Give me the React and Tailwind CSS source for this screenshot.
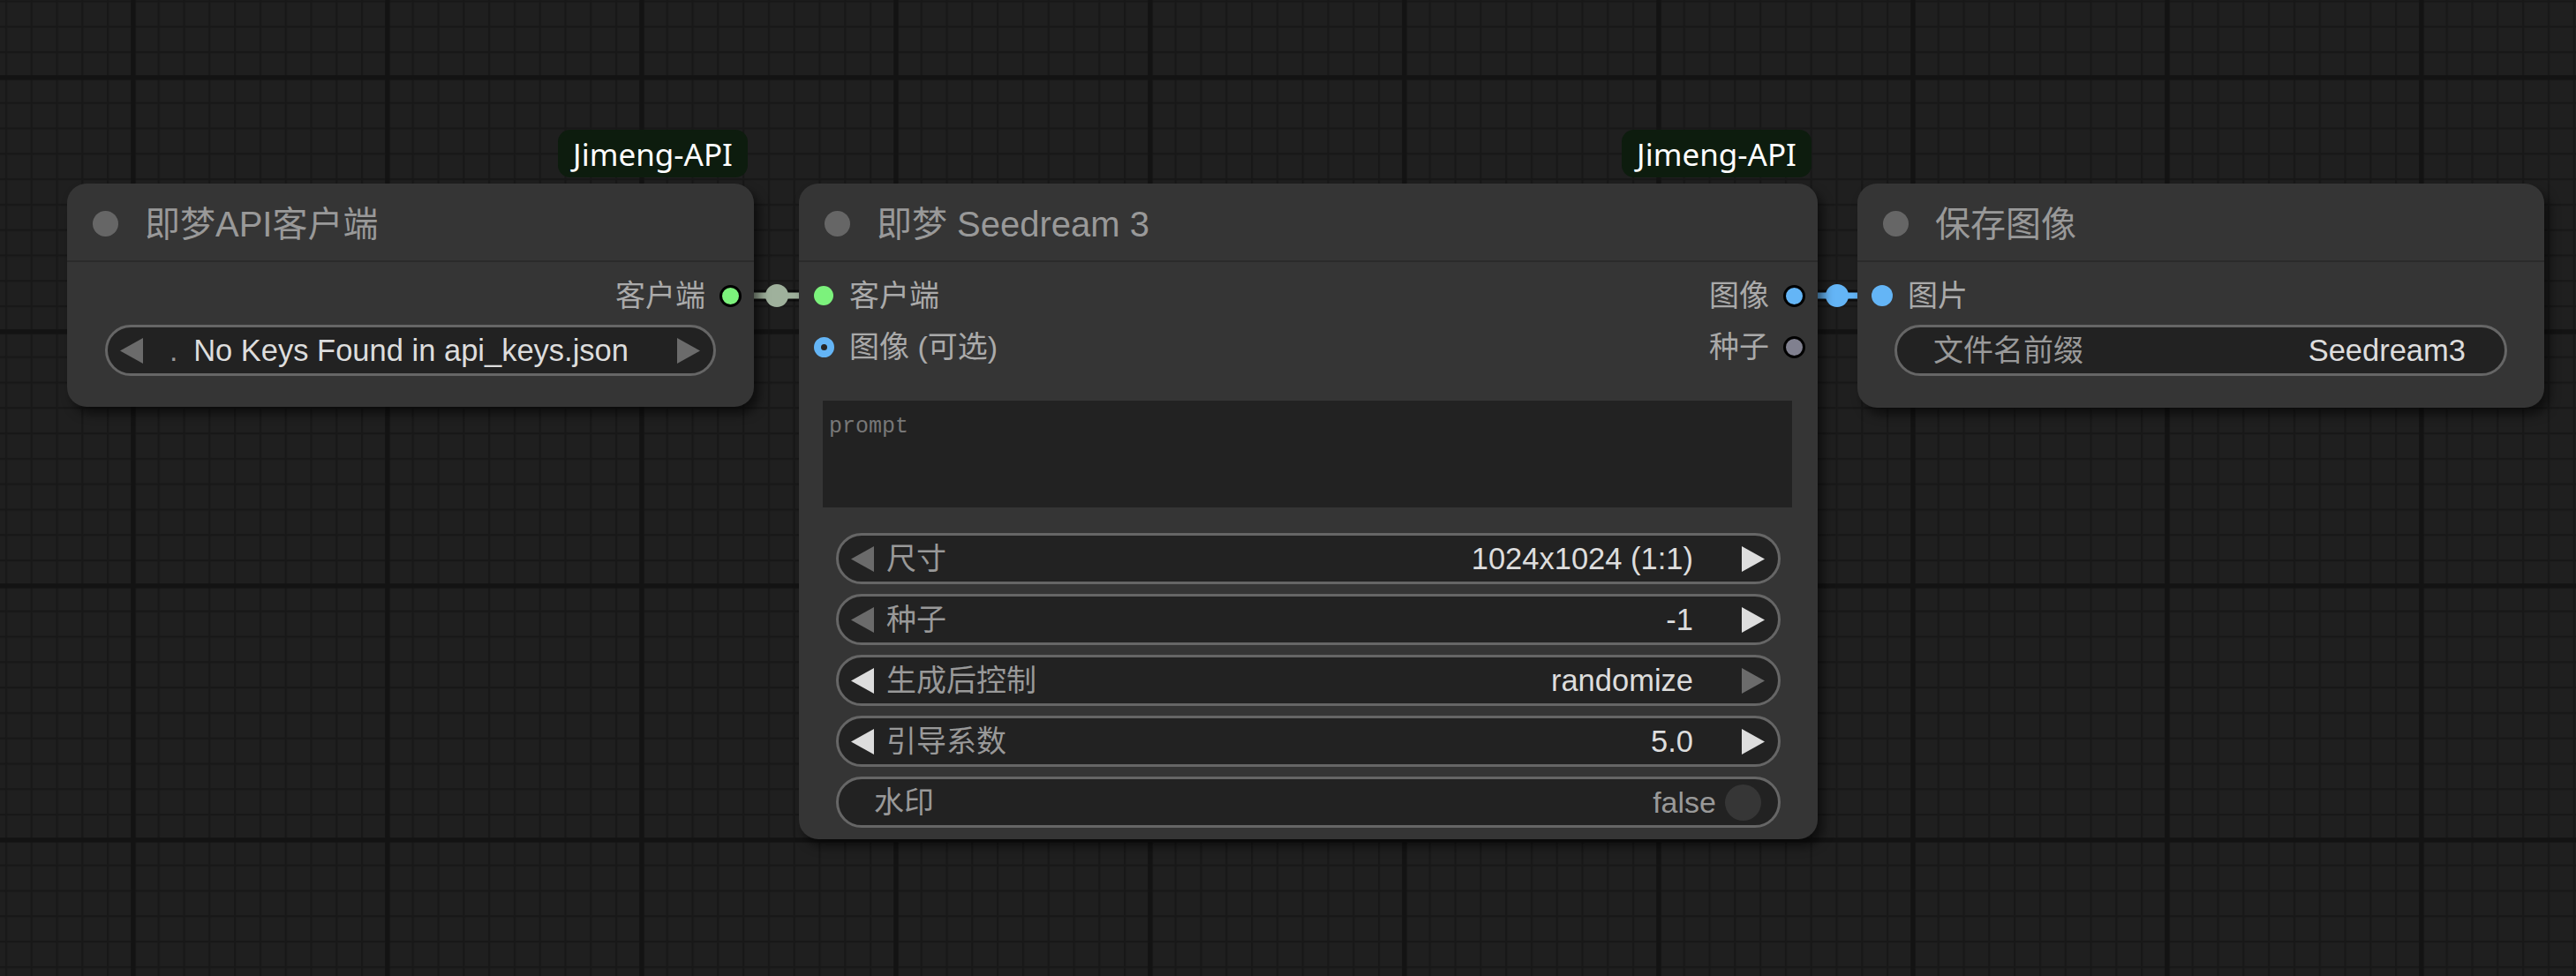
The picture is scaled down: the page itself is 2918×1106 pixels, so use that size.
import React from 'react';

const SANS = "font-['Liberation_Sans','Noto_Sans_CJK_SC',sans-serif]";

function Tri({ dir, dim }) {
  return (
    <svg width="26" height="29" viewBox="0 0 26 29" className="shrink-0">
      <polygon
        points={dir === 'left' ? '26,0 0,14.5 26,29' : '0,0 26,14.5 0,29'}
        fill={dim ? '#6b6b6b' : '#dddddd'}
      />
    </svg>
  );
}

function Badge() {
  return (
    <div className="absolute bottom-full right-[7px] mb-[7px] flex h-[54px] items-center rounded-[14px] bg-[#0d1c0e] px-[17px]">
      <span className="font-['Noto_Sans',sans-serif] text-[35px] leading-none text-white">Jimeng-API</span>
    </div>
  );
}

function Node({ title, className, badge, children }) {
  return (
    <div
      className={`absolute flex flex-col rounded-[22px] bg-[#353535] shadow-[6px_8px_12px_rgba(0,0,0,0.55)] ${SANS} ${className}`}
    >
      {badge && <Badge />}
      <div className="flex h-[89px] shrink-0 items-center gap-[30px] border-b-2 border-[#2b2b2b] pl-[29px] pt-[4px]">
        <div className="h-[29px] w-[29px] rounded-full bg-[#666]" />
        <span className="text-[40px] leading-none text-[#999]">{title}</span>
      </div>
      {children}
    </div>
  );
}

function InSlot({ label, dot }) {
  return (
    <div className="flex items-center">
      <div className="ml-[16px] flex w-[24px] justify-center">{dot}</div>
      <span className="ml-[17px] text-[34px] leading-none text-[#aaa]">{label}</span>
    </div>
  );
}

function OutSlot({ label, dot }) {
  return (
    <div className="flex items-center">
      <span className="mr-[16px] text-[34px] leading-none text-[#aaa]">{label}</span>
      <div className="mr-[14px] flex w-[25px] justify-center">{dot}</div>
    </div>
  );
}

function Combo({ label, value, leftDim, rightDim, labelClass = 'ml-[14px]' }) {
  return (
    <div className="flex h-[58px] items-center rounded-full border-[3px] border-[#666] bg-[#222] pl-[14px] pr-[15px]">
      <Tri dir="left" dim={leftDim} />
      <span className={`${labelClass} text-[34px] leading-none text-[#999]`}>{label}</span>
      <div className="flex-1" />
      <span className="mr-[55px] text-[34.5px] leading-none text-[#ddd]">{value}</span>
      <Tri dir="right" dim={rightDim} />
    </div>
  );
}

function Grid() {
  return (
    <svg className="absolute inset-0" width="2918" height="1106">
      <defs>
        <pattern id="minor" x="5.8" y="0.4" width="28.8" height="28.8" patternUnits="userSpaceOnUse">
          <rect x="0" y="0" width="2.4" height="28.8" fill="#181818" />
          <rect x="0" y="0" width="28.8" height="2.4" fill="#181818" />
        </pattern>
        <pattern id="major" x="148.2" y="85.2" width="288" height="288" patternUnits="userSpaceOnUse">
          <rect x="0" y="0" width="5.6" height="288" fill="#131313" />
          <rect x="0" y="0" width="288" height="5.6" fill="#131313" />
        </pattern>
      </defs>
      <rect width="2918" height="1106" fill="url(#minor)" />
      <rect width="2918" height="1106" fill="url(#major)" />
    </svg>
  );
}

function Links() {
  return (
    <svg className="absolute inset-0" width="2918" height="1106">
      {/* client link */}
      <line x1="828" y1="335" x2="933" y2="335" stroke="rgba(0,0,0,0.55)" strokeWidth="13" />
      <line x1="828" y1="335" x2="933" y2="335" stroke="#9fb19c" strokeWidth="7" />
      <circle cx="880" cy="335" r="13" fill="#9fb19c" />
      {/* image link */}
      <line x1="2033" y1="335" x2="2132" y2="335" stroke="rgba(0,0,0,0.55)" strokeWidth="13" />
      <line x1="2033" y1="335" x2="2132" y2="335" stroke="#64b5f6" strokeWidth="7" />
      <circle cx="2081" cy="335" r="13" fill="#64b5f6" />
    </svg>
  );
}

export default function App() {
  return (
    <div className="relative h-[1106px] w-[2918px] overflow-hidden bg-[#1f1f1f]">
      <Grid />
      <Links />

      {/* 即梦API客户端 */}
      <Node title="即梦API客户端" badge className="left-[76px] top-[208px] h-[253px] w-[778px]">
        <div className="flex flex-col pt-[9px]">
          <div className="flex h-[58px] items-center justify-end">
            <OutSlot
              label="客户端"
              dot={<div className="h-[25px] w-[25px] rounded-full border-[3px] border-black bg-[#7cf27c]" />}
            />
          </div>
          <div className="mt-[4px] px-[43px]">
            <Combo label="." value="No Keys Found in api_keys.json" leftDim rightDim labelClass="ml-[30px]" />
          </div>
        </div>
      </Node>

      {/* 即梦 Seedream 3 */}
      <Node title="即梦 Seedream 3" badge className="left-[905px] top-[208px] h-[743px] w-[1154px]">
        <div className="flex flex-col pt-[9px]">
          <div className="flex h-[58px] items-center justify-between">
            <InSlot label="客户端" dot={<div className="h-[22px] w-[22px] rounded-full bg-[#7cf27c]" />} />
            <OutSlot
              label="图像"
              dot={<div className="h-[25px] w-[25px] rounded-full border-[3px] border-black bg-[#64b5f6]" />}
            />
          </div>
          <div className="flex h-[58px] items-center justify-between">
            <InSlot
              label="图像 (可选)"
              dot={<div className="h-[23px] w-[23px] rounded-full border-[8px] border-[#64b5f6] bg-[#262626]" />}
            />
            <OutSlot
              label="种子"
              dot={<div className="h-[25px] w-[25px] rounded-full border-[3px] border-black bg-[#80808f]" />}
            />
          </div>

          <div className="ml-[27px] mr-[29px] mt-[32px] h-[121px] bg-[#222] pl-[7px] pt-[17px]">
            <span className="font-['Liberation_Mono',monospace] text-[25px] leading-none text-[#777]">prompt</span>
          </div>

          <div className="mt-[29px] flex flex-col gap-[11px] px-[42px]">
            <Combo label="尺寸" value="1024x1024 (1:1)" leftDim />
            <Combo label="种子" value="-1" leftDim />
            <Combo label="生成后控制" value="randomize" rightDim />
            <Combo label="引导系数" value="5.0" />
            <div className="flex h-[58px] items-center rounded-full border-[3px] border-[#666] bg-[#222] pl-[40px] pr-[19px]">
              <span className="text-[34px] leading-none text-[#999]">水印</span>
              <div className="flex-1" />
              <span className="mr-[10px] text-[34px] leading-none text-[#999]">false</span>
              <div className="h-[41px] w-[41px] rounded-full bg-[#363636]" />
            </div>
          </div>
        </div>
      </Node>

      {/* 保存图像 */}
      <Node title="保存图像" className="left-[2104px] top-[208px] h-[254px] w-[778px]">
        <div className="flex flex-col pt-[9px]">
          <div className="flex h-[58px] items-center">
            <InSlot label="图片" dot={<div className="h-[24px] w-[24px] rounded-full bg-[#64b5f6]" />} />
          </div>
          <div className="mt-[4px] px-[42px]">
            <div className="flex h-[58px] items-center rounded-full border-[3px] border-[#666] bg-[#222] pl-[41px] pr-[44px]">
              <span className="text-[34px] leading-none text-[#999]">文件名前缀</span>
              <div className="flex-1" />
              <span className="text-[34.5px] leading-none text-[#ddd]">Seedream3</span>
            </div>
          </div>
        </div>
      </Node>
    </div>
  );
}
